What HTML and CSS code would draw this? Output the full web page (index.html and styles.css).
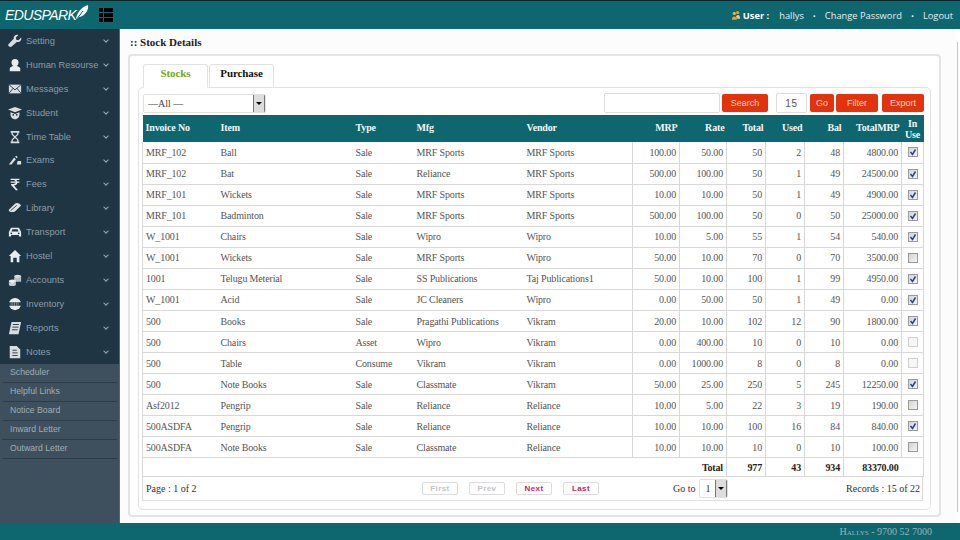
FILE: index.html
```html
<!DOCTYPE html>
<html lang="en">
<head>
    <meta charset="UTF-8">
    <meta name="viewport" content="width=device-width, initial-scale=1.0">
    <title>Stock Details</title>
    <link rel="stylesheet" href="styles.css">
</head>
<body>
    <header class="topbar">
        <div class="logo">
            <span class="logo-text">EDUSPARK</span>
            <svg class="logo-pen" width="14" height="17" viewBox="0 0 14 17"><path d="M1 16 C1 10 6 3 13 1 C14 6 10 12 4 13 Z" fill="#fff"/><path d="M1 16 L8 7" stroke="#0e666e" stroke-width="1" fill="none"/></svg>
        </div>
        <div class="grid-toggle"><i></i><i></i><i></i><i></i><i></i><i></i></div>
        <nav class="user-nav">
            <svg width="10" height="11" viewBox="0 0 12 12"><circle cx="4" cy="3.5" r="2" fill="#f0b040"/><circle cx="8" cy="2.5" r="2" fill="#e89a20"/><path d="M1 11 C1 6 7 6 7 11 Z" fill="#e8a030"/><path d="M6 7 C8 4 11 5 11 10 L7 10 Z" fill="#f7c860"/></svg>
            <b>User :</b>
            <a class="user-name">hallys</a>
            <span class="dot">&bull;</span>
            <a>Change Password</a>
            <span class="dot">&bull;</span>
            <a>Logout</a>
        </nav>
    </header>

    <div class="layout">
        <aside class="sidebar">
            <ul class="menu">
                <li><svg viewBox="0 0 16 16"><path d="M15 4 L12 7 L9.5 6.5 L9 4 L12 1 C9 0 6 2 6.5 5.5 L1 11 C0 12 0 13 1 14 C2 15 3.5 15 4.5 14 L10 9 C13.5 10 16 7 15 4 Z" fill="#d8dde0"/></svg><span>Setting</span></li>
                <li><svg viewBox="0 0 16 16"><circle cx="8" cy="5" r="4" fill="#e8ecee"/><path d="M2 15 L2 12 C2 10 6 10 6 8 L10 8 C10 10 14 10 14 12 L14 15 Z" fill="#e8ecee"/></svg><span>Human Resourse</span></li>
                <li><svg viewBox="0 0 16 16"><path d="M1 3 H15 V13 H1 Z" fill="#d8dde0"/><path d="M1 3 L8 9 L15 3 M1 13 L6 7 M15 13 L10 7" stroke="#1f3544" fill="none"/></svg><span>Messages</span></li>
                <li><svg viewBox="0 0 16 16"><path d="M0 4 L8 1 L16 4 L8 7 Z" fill="#d8dde0"/><path d="M3 7 C2 12 5 15 8 15 C11 15 14 12 13 7 L8 9 Z" fill="#d8dde0"/><circle cx="6" cy="10" r="1" fill="#1f3544"/><circle cx="10" cy="10" r="1" fill="#1f3544"/></svg><span>Student</span></li>
                <li><svg viewBox="0 0 16 16"><path d="M3 1 H13 V3 H12 V5 L9 8 L12 11 V13 H13 V15 H3 V13 H4 V11 L7 8 L4 5 V3 H3 Z M5.5 3 V4.5 L8 7 L10.500 4.5 V3 Z M8 9 L5.5 11.5 V13 H10.500 V11.500 Z" fill="#d8dde0" fill-rule="evenodd"/></svg><span>Time Table</span></li>
                <li><svg viewBox="0 0 16 16"><path d="M1 13 L7 5 L9 7 L4 13 Z" fill="#d8dde0"/><path d="M8 4 L10 3 L11 5 L10 6 Z M10 13 L11 9 L15 9 L15 13 Z" fill="#d8dde0"/></svg><span>Exams</span></li>
                <li><svg viewBox="0 0 16 16"><path d="M3 2 H13 V3.500 H9.500 C10 4 10.500 4.500 10.700 5.200 H13 V6.700 H10.800 C10.500 8.500 9 9.600 6.800 9.800 L11.500 15 H9 L3.500 9 V8 H6 C7.500 8 8.600 7.500 8.900 6.700 H3 V5.200 H8.800 C8.400 4.200 7.500 3.500 6 3.500 H3 Z" fill="#e8ecee"/></svg><span>Fees</span></li>
                <li><svg viewBox="0 0 16 16"><path d="M1 10 L8 3 C9 2 11 2 13 3 L15 5 L8 12 C6 13 3 13 1 12 Z" fill="#e0e4e6"/><path d="M3 11 L10 5 M1 12 C3 14 6 14 8 13 L15 7" stroke="#1f3544" fill="none"/></svg><span>Library</span></li>
                <li><svg viewBox="0 0 16 16"><path d="M1 8 L3 4 C3.500 3 4.500 3 5 3 H11 C11.500 3 12.500 3 13 4 L15 8 V13 H12.500 V11.500 H3.500 V13 H1 Z" fill="#e8ecee"/><path d="M4 7.500 L5 4.800 H11 L12 7.500 Z" fill="#1f3544"/><circle cx="3.800" cy="9.500" r="1" fill="#1f3544"/><circle cx="12.200" cy="9.500" r="1" fill="#1f3544"/></svg><span>Transport</span></li>
                <li><svg viewBox="0 0 16 16"><path d="M8 1 L15 8 H13 V15 H10 V10 H6 V15 H3 V8 H1 Z" fill="#e8ecee"/></svg><span>Hostel</span></li>
                <li><svg viewBox="0 0 16 16"><ellipse cx="11" cy="4" rx="4" ry="2" fill="#d8dde0"/><path d="M7 5 V10 H15 V4 C15 6 7 6 7 5 Z" fill="#b8c0c5"/><ellipse cx="5" cy="9.500" rx="4" ry="2" fill="#e8ecee"/><path d="M1 10 V13 C1 15.500 9 15.500 9 13 V10 C9 12 1 12 1 10 Z" fill="#c8d0d4"/></svg><span>Accounts</span></li>
                <li class="inv"><svg viewBox="0 0 16 16"><circle cx="8" cy="8" r="7" fill="#e8ecee"/><rect x="1" y="6" width="14" height="4" fill="#1f3544"/><path d="M3 7 H13 M3 9 H13" stroke="#e8ecee" stroke-dasharray="1 1"/></svg><span>Inventory</span></li>
                <li><svg viewBox="0 0 16 16"><path d="M4 1 H15 L12 15 H1 Z" fill="#d8dde0"/><path d="M5.500 4 H12.500 M5 7 H12 M4.500 10 H11" stroke="#1f3544" fill="none"/></svg><span>Reports</span></li>
                <li><svg viewBox="0 0 16 16"><path d="M2 1 H10 L14 5 V15 H2 Z" fill="#d8dde0"/><path d="M5 6 H10 M5 9 H11 M5 12 H11" stroke="#1f3544" fill="none"/></svg><span>Notes</span></li>
            </ul>
            <ul class="submenu">
                <li>Scheduler</li>
                <li>Helpful Links</li>
                <li>Notice Board</li>
                <li>Inward Letter</li>
                <li>Outward Letter</li>
            </ul>
        </aside>

        <main class="content">
            <h1 class="page-title">:: Stock Details</h1>
            <div class="outer-box">
                <div class="tabs">
                    <a class="tab active">Stocks</a>
                    <a class="tab">Purchase</a>
                </div>
                <div class="tab-panel">
                    <div class="toolbar">
                        <select class="filter-select"><option>&mdash;All &mdash;</option></select>
                        <div class="toolbar-right">
                            <input class="search-input" type="text">
                            <button class="btn btn-search">Search</button>
                            <input class="page-size" type="text" value="15">
                            <button class="btn btn-go">Go</button>
                            <button class="btn btn-filter">Filter</button>
                            <button class="btn btn-export">Export</button>
                        </div>
                    </div>
                    <table class="stock-table">
                        <colgroup>
                            <col class="c-inv"><col class="c-item"><col class="c-type"><col class="c-mfg"><col class="c-vendor">
                            <col class="c-mrp"><col class="c-mrp"><col class="c-num"><col class="c-num"><col class="c-num"><col class="c-tot"><col class="c-use">
                        </colgroup>
                        <thead>
                            <tr>
                                <th>Invoice No</th><th>Item</th><th>Type</th><th>Mfg</th><th>Vendor</th>
                                <th class="num">MRP</th><th class="num">Rate</th><th class="num">Total</th><th class="num">Used</th><th class="num">Bal</th><th class="num">TotalMRP</th><th class="use">In Use</th>
                            </tr>
                        </thead>
                        <tbody>
                            <tr><td>MRF_102</td><td>Ball</td><td>Sale</td><td>MRF Sports</td><td>MRF Sports</td><td class="num">100.00</td><td class="num">50.00</td><td class="num">50</td><td class="num">2</td><td class="num">48</td><td class="num">4800.00</td><td class="use"><input type="checkbox" checked></td></tr>
                            <tr><td>MRF_102</td><td>Bat</td><td>Sale</td><td>Reliance</td><td>MRF Sports</td><td class="num">500.00</td><td class="num">100.00</td><td class="num">50</td><td class="num">1</td><td class="num">49</td><td class="num">24500.00</td><td class="use"><input type="checkbox" checked></td></tr>
                            <tr><td>MRF_101</td><td>Wickets</td><td>Sale</td><td>MRF Sports</td><td>MRF Sports</td><td class="num">10.00</td><td class="num">10.00</td><td class="num">50</td><td class="num">1</td><td class="num">49</td><td class="num">4900.00</td><td class="use"><input type="checkbox" checked></td></tr>
                            <tr><td>MRF_101</td><td>Badminton</td><td>Sale</td><td>MRF Sports</td><td>MRF Sports</td><td class="num">500.00</td><td class="num">100.00</td><td class="num">50</td><td class="num">0</td><td class="num">50</td><td class="num">25000.00</td><td class="use"><input type="checkbox" checked></td></tr>
                            <tr><td>W_1001</td><td>Chairs</td><td>Sale</td><td>Wipro</td><td>Wipro</td><td class="num">10.00</td><td class="num">5.00</td><td class="num">55</td><td class="num">1</td><td class="num">54</td><td class="num">540.00</td><td class="use"><input type="checkbox" checked></td></tr>
                            <tr><td>W_1001</td><td>Wickets</td><td>Sale</td><td>MRF Sports</td><td>Wipro</td><td class="num">50.00</td><td class="num">10.00</td><td class="num">70</td><td class="num">0</td><td class="num">70</td><td class="num">3500.00</td><td class="use"><input type="checkbox"></td></tr>
                            <tr><td>1001</td><td>Telugu Meterial</td><td>Sale</td><td>SS Publications</td><td>Taj Publications1</td><td class="num">50.00</td><td class="num">10.00</td><td class="num">100</td><td class="num">1</td><td class="num">99</td><td class="num">4950.00</td><td class="use"><input type="checkbox" checked></td></tr>
                            <tr><td>W_1001</td><td>Acid</td><td>Sale</td><td>JC Cleaners</td><td>Wipro</td><td class="num">0.00</td><td class="num">50.00</td><td class="num">50</td><td class="num">1</td><td class="num">49</td><td class="num">0.00</td><td class="use"><input type="checkbox" checked></td></tr>
                            <tr><td>500</td><td>Books</td><td>Sale</td><td>Pragathi Publications</td><td>Vikram</td><td class="num">20.00</td><td class="num">10.00</td><td class="num">102</td><td class="num">12</td><td class="num">90</td><td class="num">1800.00</td><td class="use"><input type="checkbox" checked></td></tr>
                            <tr><td>500</td><td>Chairs</td><td>Asset</td><td>Wipro</td><td>Vikram</td><td class="num">0.00</td><td class="num">400.00</td><td class="num">10</td><td class="num">0</td><td class="num">10</td><td class="num">0.00</td><td class="use"><input type="checkbox" disabled></td></tr>
                            <tr><td>500</td><td>Table</td><td>Consume</td><td>Vikram</td><td>Vikram</td><td class="num">0.00</td><td class="num">1000.00</td><td class="num">8</td><td class="num">0</td><td class="num">8</td><td class="num">0.00</td><td class="use"><input type="checkbox" disabled></td></tr>
                            <tr><td>500</td><td>Note Books</td><td>Sale</td><td>Classmate</td><td>Vikram</td><td class="num">50.00</td><td class="num">25.00</td><td class="num">250</td><td class="num">5</td><td class="num">245</td><td class="num">12250.00</td><td class="use"><input type="checkbox" checked></td></tr>
                            <tr><td>Asf2012</td><td>Pengrip</td><td>Sale</td><td>Reliance</td><td>Reliance</td><td class="num">10.00</td><td class="num">5.00</td><td class="num">22</td><td class="num">3</td><td class="num">19</td><td class="num">190.00</td><td class="use"><input type="checkbox"></td></tr>
                            <tr><td>500ASDFA</td><td>Pengrip</td><td>Sale</td><td>Reliance</td><td>Reliance</td><td class="num">10.00</td><td class="num">10.00</td><td class="num">100</td><td class="num">16</td><td class="num">84</td><td class="num">840.00</td><td class="use"><input type="checkbox" checked></td></tr>
                            <tr><td>500ASDFA</td><td>Note Books</td><td>Sale</td><td>Classmate</td><td>Reliance</td><td class="num">10.00</td><td class="num">10.00</td><td class="num">10</td><td class="num">0</td><td class="num">10</td><td class="num">100.00</td><td class="use"><input type="checkbox"></td></tr>
                        </tbody>
                        <tfoot>
                            <tr><td colspan="7" class="num">Total</td><td class="num">977</td><td class="num">43</td><td class="num">934</td><td class="num">83370.00</td><td></td></tr>
                        </tfoot>
                    </table>
                    <div class="pager">
                        <span class="page-info">Page : 1 of 2</span>
                        <div class="pager-buttons">
                            <a class="pg off">First</a>
                            <a class="pg off">Prev</a>
                            <a class="pg on">Next</a>
                            <a class="pg on">Last</a>
                        </div>
                        <div class="goto">Go to <select class="goto-select"><option>1</option></select></div>
                        <span class="records">Records : 15 of 22</span>
                    </div>
                </div>
            </div>
        </main>
        <div class="side-rail"></div>
    </div>

    <footer class="bottombar">Hallys - 9700 52 7000</footer>
</body>
</html>
```

FILE: styles.css
```css
* {
    box-sizing: border-box;
}
html, body {
    height: 100%;
}
body {
    margin: 0;
    display: flex;
    flex-direction: column;
    height: 540px;
    overflow: hidden;
    font-family: "Liberation Serif", serif;
    background-color: #fff;
}
ul {
    list-style: none;
    margin: 0;
    padding: 0;
}

/* top bar */
.topbar {
    display: flex;
    align-items: center;
    height: 29px;
    flex: none;
    background-color: #0e666e;
    border-top: 1px solid #08282c;
    color: #e8f0f0;
}
.logo {
    display: flex;
    align-items: center;
    width: 99px;
    padding-left: 5px;
}
.logo-text {
    font-family: "Liberation Sans", sans-serif;
    font-style: italic;
    font-size: 14px;
    letter-spacing: -0.6px;
    color: #fff;
}
.logo-pen {
    margin-left: -1px;
    margin-top: -6px;
}
.grid-toggle {
    display: grid;
    grid-template-columns: 4px 9px;
    gap: 1px;
    width: 14px;
    height: 14px;
}
.grid-toggle i {
    background-color: #000;
    height: 4px;
}
.user-nav {
    display: flex;
    align-items: center;
    margin-left: auto;
    padding-right: 7px;
    font-family: "Open Sans", sans-serif;
    font-size: 9.3px;
}
.user-nav svg {
    margin-right: 2px;
}
.user-nav b {
    margin-right: 10px;
    color: #fff;
}
.dot {
    margin: 0 9px;
    font-size: 8px;
}

.layout {
    display: flex;
    flex: 1;
    min-height: 0;
}

/* sidebar */
.sidebar {
    width: 120px;
    flex: none;
    background-color: #3e505d;
    border-right: 1px solid #59666f;
    font-family: "Liberation Sans", sans-serif;
}
.menu {
    background-color: #1f3544;
}
.menu li {
    position: relative;
    display: flex;
    align-items: center;
    height: 23.92px;
    padding-left: 8px;
    font-size: 9.3px;
    color: #8c9ba6;
}
.menu li svg {
    width: 14px;
    height: 14px;
    margin-right: 4px;
}
.menu li::after {
    content: "";
    position: absolute;
    right: 11px;
    top: 9px;
    width: 3px;
    height: 3px;
    border-right: 1.5px solid #9aa8b2;
    border-bottom: 1.5px solid #9aa8b2;
    transform: rotate(45deg);
}
.submenu li {
    height: 19px;
    line-height: 16px;
    margin: 0 2px;
    padding-left: 8px;
    font-size: 8.7px;
    color: #a0adb5;
    border-bottom: 1px solid #2c3d49;
}

/* content */
.content {
    flex: 1;
    min-width: 0;
    padding: 0 16px 0 8px;
    background-color: #fcfcfc;
}
.page-title {
    margin: 0;
    padding: 7px 2px 6px;
    height: 25px;
    font-size: 11px;
    line-height: 13px;
    color: #222;
}
.outer-box {
    height: 463px;
    padding: 8px 8px 0;
    background-color: #fff;
    border: 2px solid #e4e4e4;
    border-radius: 4px;
}
.side-rail {
    flex: none;
    width: 3px;
    margin: 13px 0 11px;
    background-color: #fff;
    border-left: 1px solid #c8c8c8;
}
.tabs {
    display: flex;
    gap: 1px;
    padding-left: 5px;
    height: 23px;
    position: relative;
    z-index: 1;
}
.tab {
    display: flex;
    align-items: center;
    justify-content: center;
    width: 65px;
    height: 24px;
    padding-bottom: 6px;
    font-size: 11px;
    font-weight: bold;
    letter-spacing: -0.1px;
    color: #111;
    background-color: #fff;
    border: 1px solid #e2e2e2;
    border-radius: 3px 3px 0 0;
}
.tab.active {
    color: #6fa820;
    border-bottom-color: #fff;
}
.tab-panel {
    height: 423px;
    padding: 5px 0 0 3px;
    border: 1px solid #e2e2e2;
    border-radius: 5px;
}

/* toolbar */
.toolbar {
    display: flex;
    align-items: center;
    justify-content: space-between;
    width: 781px;
    height: 20px;
    margin: 0 0 2px 1px;
}
.filter-select {
    width: 123px;
    height: 19px;
    padding-left: 4px;
    appearance: none;
    font-family: "Liberation Serif", serif;
    font-size: 10px;
    color: #444;
    border: 1px solid #e0e0e0;
    border-radius: 2px;
    background: #fff url("data:image/svg+xml,%3Csvg xmlns='http://www.w3.org/2000/svg' width='12' height='19'%3E%3Crect x='.5' y='.5' width='11' height='18' fill='%23ddd' stroke='%23777'/%3E%3Cpath d='M3 8h6l-3 3z' fill='%23000'/%3E%3C/svg%3E") no-repeat right center;
}
.toolbar-right {
    display: flex;
    align-items: center;
}
.search-input {
    width: 116px;
    height: 20px;
    border: 1px solid #ddd;
    border-radius: 2px;
    margin-right: 2px;
}
.page-size {
    width: 31px;
    height: 20px;
    margin: 0 3px 0 8px;
    padding: 0;
    text-align: center;
    font-family: "Liberation Sans", sans-serif;
    font-size: 10px;
    letter-spacing: 0.6px;
    color: #555;
    border: 1px solid #ddd;
    border-radius: 2px;
}
.btn {
    height: 18px;
    padding: 0;
    font-family: "Liberation Sans", sans-serif;
    font-size: 9px;
    color: #f3d5cc;
    background-color: #e2340c;
    border: none;
    border-radius: 2px;
}
.btn-search { width: 46px; }
.btn-go { width: 24px; margin-right: 2px; }
.btn-filter { width: 42px; margin-right: 4px; }
.btn-export { width: 42px; }

/* table */
.stock-table {
    table-layout: fixed;
    width: 781px;
    border-collapse: collapse;
    font-size: 10px;
    letter-spacing: -0.15px;
    color: #555;
}
.c-inv { width: 75px; }
.c-item { width: 135px; }
.c-type { width: 61px; }
.c-mfg { width: 110px; }
.c-vendor { width: 109px; }
.c-mrp { width: 47px; }
.c-num { width: 39px; }
.c-tot { width: 58px; }
.c-use { width: 22px; }
.stock-table th {
    height: 27px;
    padding: 0 3px 3px;
    text-align: left;
    line-height: 11px;
    color: #f2f7f7;
    background-color: #0e666e;
}
.stock-table th.num {
    padding-right: 2px;
}
.stock-table td {
    height: 21.07px;
    padding: 0 3px;
    white-space: nowrap;
    border-bottom: 1px solid #d8d8d8;
}
.stock-table td.num,
.stock-table th.num {
    text-align: right;
}
.stock-table tbody td:nth-child(n+6),
.stock-table tfoot td:nth-child(n+2) {
    border-left: 1px solid #d8d8d8;
}
.stock-table tbody td:last-child,
.stock-table tfoot td:last-child {
    border-right: 1px solid #d8d8d8;
}
.stock-table tfoot td:last-child {
    border-left: none;
}
.stock-table tbody td:first-child,
.stock-table tfoot td:first-child {
    border-left: 1px solid #d8d8d8;
}
.stock-table tfoot td {
    height: 19px;
    font-weight: bold;
    color: #222;
}
.stock-table .use {
    padding: 0;
    text-align: center;
}
.stock-table input[type="checkbox"] {
    appearance: none;
    display: block;
    width: 10px;
    height: 10px;
    margin: 0 auto;
    border: 1px solid #9a9a9a;
    background: linear-gradient(135deg, #d4d4d4, #f4f4f4);
}
.stock-table input[type="checkbox"]:checked {
    background: url("data:image/svg+xml,%3Csvg xmlns='http://www.w3.org/2000/svg' width='8' height='8'%3E%3Cpath d='M1.500 4l2 2.500 3-5' fill='none' stroke='%232a3f9a' stroke-width='1.500'/%3E%3C/svg%3E") no-repeat center, linear-gradient(135deg, #d4d4d4, #f4f4f4);
}
.stock-table input[type="checkbox"]:disabled {
    border-color: #d0d0d0;
    background: #f6f6f6;
}

/* pager */
.pager {
    display: flex;
    align-items: center;
    width: 781px;
    height: 24px;
    padding: 0 2px 0 3px;
    font-size: 10px;
    color: #333;
    border: 1px solid #e2e2e2;
    border-top: none;
    border-left-color: #d8d8d8;
    border-right-color: #d8d8d8;
}
.page-info {
    width: 276px;
}
.pager-buttons {
    display: flex;
    gap: 11px;
    width: 251px;
}
.pg {
    width: 36px;
    height: 13px;
    line-height: 11px;
    text-align: center;
    font-family: "Liberation Sans", sans-serif;
    font-size: 8px;
    font-weight: bold;
    letter-spacing: 0.4px;
    border: 1px solid #ddd;
    border-radius: 2px;
}
.pg.off {
    color: #c4c4c4;
}
.pg.on {
    color: #d0186a;
}
.goto {
    display: flex;
    align-items: center;
    gap: 3px;
}
.goto-select {
    width: 29px;
    height: 19px;
    padding-left: 6px;
    appearance: none;
    font-family: "Liberation Serif", serif;
    font-size: 10px;
    color: #333;
    border: 1px solid #e0e0e0;
    border-radius: 2px;
    background: #fff url("data:image/svg+xml,%3Csvg xmlns='http://www.w3.org/2000/svg' width='12' height='19'%3E%3Crect x='.5' y='.5' width='11' height='18' fill='%23ddd' stroke='%23777'/%3E%3Cpath d='M3 8h6l-3 3z' fill='%23000'/%3E%3C/svg%3E") no-repeat right center;
}
.records {
    margin-left: auto;
}

/* footer */
.bottombar {
    flex: none;
    height: 17px;
    padding-right: 28px;
    line-height: 17px;
    text-align: right;
    font-size: 10px;
    font-variant: small-caps;
    color: #9db5b8;
    background-color: #0e666e;
}
```
